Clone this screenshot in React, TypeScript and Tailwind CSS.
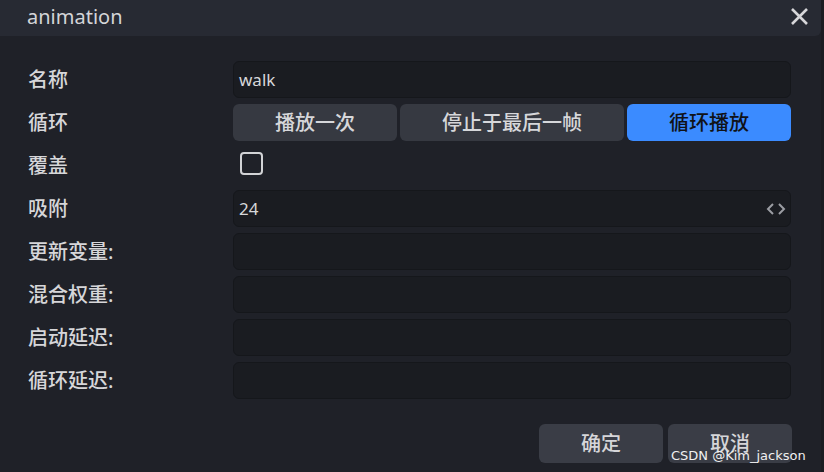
import { useState } from "react";

const font = { fontFamily: '"Noto Sans", "Noto Sans CJK SC", sans-serif' };

const Field = ({ children }: { children?: React.ReactNode }) => (
  <div className="h-[37px] w-[558px] rounded-md border border-[#15171b] bg-[#1a1c21] flex items-center px-[5px] text-[17px] text-[#d6d7da]">
    {children}
  </div>
);

const Row = ({ label, children }: { label: string; children: React.ReactNode }) => (
  <div className="flex items-center h-[37px]">
    <div className="w-[205px] text-[20px] font-medium text-[#d6d6d9]">{label}</div>
    {children}
  </div>
);

export default function App() {
  const [mode, setMode] = useState(2);
  const modes = ["播放一次", "停止于最后一帧", "循环播放"];

  return (
    <div className="w-[824px] h-[472px] bg-[#1b1d22] overflow-hidden relative" style={font}>
      <div className="w-[821px] h-full bg-[#1f2128] flex flex-col">
        {/* HEADER */}
        <div className="h-[36px] bg-[#272a33] rounded-br-md flex items-center justify-between pl-[27px] pr-[12px]">
          <span className="text-[20px] text-[#d4d5d8] mt-[-2px]">animation</span>
          <svg width="19" height="19" viewBox="0 0 19 19" className="mt-[-3px]">
            <path d="M2 2 L17 17 M17 2 L2 17" stroke="#d6d6d9" strokeWidth="2.6" />
          </svg>
        </div>

        {/* FORM */}
        <div className="pl-[28px] pt-[25px] flex flex-col gap-[6px]">
          <Row label="名称">
            <Field>walk</Field>
          </Row>
          <Row label="循环">
            <div className="flex gap-[3px] w-[558px] h-[37px]">
              {modes.map((m, i) => (
                <button
                  key={m}
                  onClick={() => setMode(i)}
                  className={`h-full rounded-md text-[20px] font-medium ${
                    i === 1 ? "w-[224px]" : "w-[164px]"
                  } ${mode === i ? "bg-[#3b8bff] text-[#101216]" : "bg-[#363941] text-[#d6d7da]"}`}
                >
                  {m}
                </button>
              ))}
            </div>
          </Row>
          <Row label="覆盖">
            <div className="w-[558px] flex pl-[7px] mt-[-4px]">
              <div className="w-[23px] h-[23px] rounded-[4px] border-[2.5px] border-[#d2d3d6]" />
            </div>
          </Row>
          <Row label="吸附">
            <Field>
              <span className="flex-1">24</span>
              <svg width="20" height="14" viewBox="0 0 20 14" className="mr-[-1px]">
                <path d="M7 2 L2 7 L7 12 M13 2 L18 7 L13 12" stroke="#9b9da3" strokeWidth="2" fill="none" />
              </svg>
            </Field>
          </Row>
          <Row label="更新变量:">
            <Field />
          </Row>
          <Row label="混合权重:">
            <Field />
          </Row>
          <Row label="启动延迟:">
            <Field />
          </Row>
          <Row label="循环延迟:">
            <Field />
          </Row>
        </div>

        {/* FOOTER */}
        <div className="flex justify-end gap-[5px] pr-[29px] mt-[25px]">
          <button className="w-[124px] h-[39px] rounded-md bg-[#3a3d46] text-[20px] font-medium text-[#d6d6d9]">确定</button>
          <button className="w-[124px] h-[39px] rounded-md bg-[#3a3d46] text-[20px] font-medium text-[#d6d6d9]">取消</button>
        </div>
      </div>

      {/* watermark */}
      <div className="absolute left-[671px] top-[446px] text-[13px] text-[#f0f0f0]" style={{ fontFamily: '"DejaVu Sans", sans-serif' }}>
        CSDN @Kim_jackson
      </div>
    </div>
  );
}
